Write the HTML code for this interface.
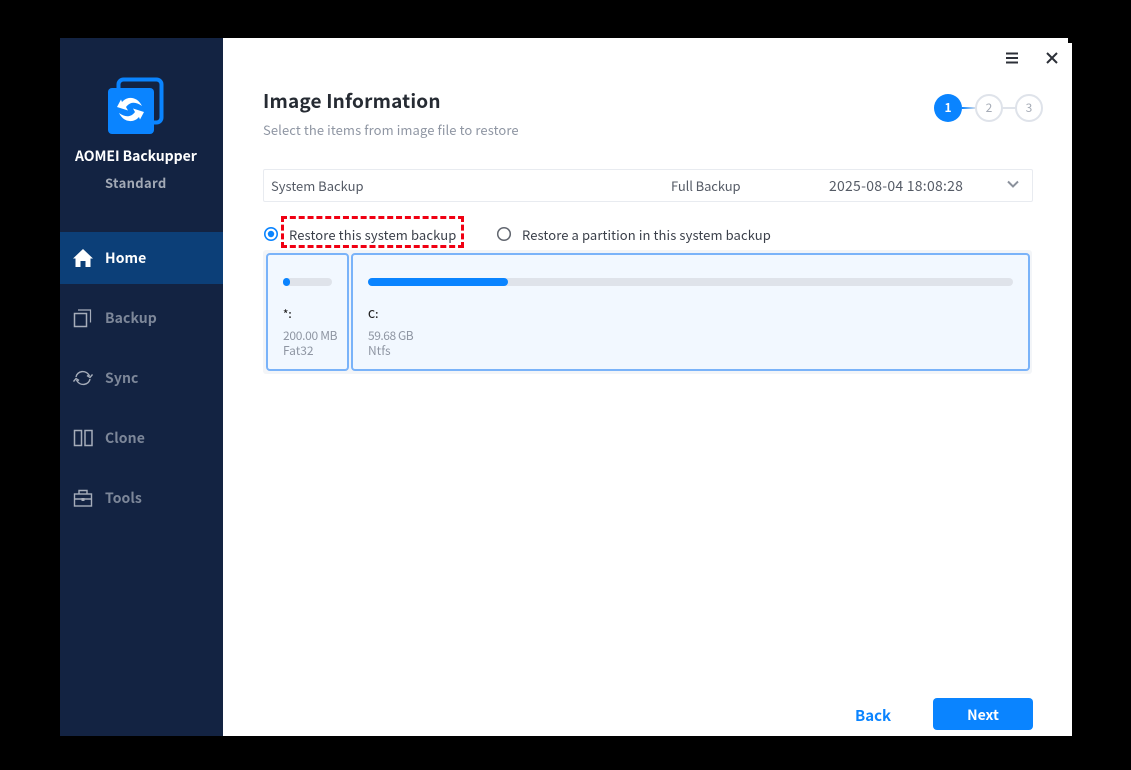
<!DOCTYPE html>
<html><head><meta charset="utf-8">
<style>
html,body{margin:0;padding:0;width:1131px;height:770px;background:#000;overflow:hidden}
body{position:relative;font-family:"Noto Sans CJK SC","Liberation Sans",sans-serif;color:#333}
div,span,svg{position:absolute}
.t{white-space:nowrap;line-height:20px;height:20px}
.nav{left:105px;font-size:14px;font-weight:700;color:#7d8799;letter-spacing:.1px}
</style></head><body>
<div style="left:60px;top:38px;width:163px;height:698px;background:#132342"></div>
<div style="left:223px;top:38px;width:849px;height:698px;background:#fff"></div>
<div style="left:1068px;top:38px;width:4px;height:5px;background:#000"></div>
<div style="left:60px;top:232px;width:163px;height:52px;background:#0c3f78"></div>

<svg style="left:107px;top:77px" width="58" height="58" viewBox="0 0 58 58">
<rect x="11.5" y="2.5" width="43" height="43" rx="5" fill="none" stroke="#0a84ff" stroke-width="4"/>
<rect x="1" y="11" width="46" height="46" rx="4" fill="#0a84ff"/>
<path d="M10 30 L14 22.5 L15 25 C20 19 30 19 35 29 C29 24.5 23 24.5 19 30 L21 33.5 Z" fill="#fff"/>
<path d="M37 35 L33 42.5 L32 40 C27 46 17 46 12 36 C18 40.5 24 40.5 28 35 L26 31.5 Z" fill="#fff"/>
</svg>
<div class="t" style="left:75px;top:146px;font-size:14px;font-weight:700;color:#fff;letter-spacing:-.05px">AOMEI Backupper</div>
<div class="t" style="left:105px;top:173px;font-size:13px;font-weight:700;color:#a2a9b5;letter-spacing:.35px">Standard</div>

<svg style="left:73px;top:248px" width="20" height="20" viewBox="0 0 20 20"><path d="M10 1 L20 10.5 L17.5 10.5 L17.5 19 L12.5 19 L12.5 13 L7.5 13 L7.5 19 L2.5 19 L2.5 10.5 L0 10.5 Z" fill="#fff"/></svg>
<div class="t nav" style="top:248px;color:#fff">Home</div>

<svg style="left:73px;top:308px" width="20" height="20" viewBox="0 0 20 20" fill="none" stroke="#a6adba" stroke-width="1.5"><rect x="1.5" y="5.5" width="12" height="13"/><path d="M5 2 H17.5 V14.5" stroke-width="1.2"/></svg>
<div class="t nav" style="top:308px">Backup</div>

<svg style="left:73px;top:368px" width="20" height="20" viewBox="0 0 20 20" fill="none" stroke="#a6adba" stroke-width="1.4"><path d="M3 9 C4 3 13 1 16.5 8"/><path d="M17 11 C16 17 7 19 3.5 12"/><path d="M14 7.5 L17 9.5 L19.5 6.5"/><path d="M6 12.5 L3 10.5 L0.5 13.5"/></svg>
<div class="t nav" style="top:368px">Sync</div>

<svg style="left:73px;top:428px" width="20" height="20" viewBox="0 0 20 20" fill="none" stroke="#a6adba" stroke-width="1.5"><rect x="1.5" y="2.5" width="7" height="15"/><rect x="12" y="2.5" width="7" height="15"/></svg>
<div class="t nav" style="top:428px">Clone</div>

<svg style="left:73px;top:488px" width="20" height="20" viewBox="0 0 20 20" fill="none" stroke="#a6adba" stroke-width="1.4"><rect x="1.5" y="6" width="17" height="12"/><path d="M6 6 V2.5 H14 V6"/><path d="M1.5 11 H18.5"/><rect x="8.5" y="10" width="3" height="3" fill="#a6adba" stroke="none"/></svg>
<div class="t nav" style="top:488px">Tools</div>

<svg style="left:1005px;top:51px" width="14" height="14" viewBox="0 0 14 14" fill="#2c3038"><rect x="1" y="1.5" width="12" height="2"/><rect x="1" y="6" width="12" height="2"/><rect x="1" y="10.5" width="12" height="2"/></svg>
<svg style="left:1045px;top:51px" width="14" height="14" viewBox="0 0 14 14" fill="none" stroke="#2c3038" stroke-width="2"><path d="M2 2 L12 12 M12 2 L2 12"/></svg>

<div class="t" style="left:263px;top:89px;height:24px;line-height:24px;font-size:19px;font-weight:700;color:#262b33;letter-spacing:.18px">Image Information</div>
<div class="t" style="left:263px;top:120px;font-size:13px;color:#8f96a3;letter-spacing:.1px">Select the items from image file to restore</div>

<div style="left:962px;top:107px;width:14px;height:2px;background:linear-gradient(90deg,#0a84ff,#dfe3ea)"></div>
<div style="left:1002px;top:107px;width:14px;height:2px;background:#dfe3ea"></div>
<div style="left:934px;top:94px;width:28px;height:28px;border-radius:50%;background:#0a84ff;color:#fff;font-size:12px;font-weight:700;line-height:28px;text-align:center">1</div>
<div style="left:975px;top:94px;width:24px;height:24px;border:2px solid #dfe3ea;border-radius:50%;color:#a5abb6;font-size:12px;line-height:24px;text-align:center">2</div>
<div style="left:1015px;top:94px;width:24px;height:24px;border:2px solid #dfe3ea;border-radius:50%;color:#a5abb6;font-size:12px;line-height:24px;text-align:center">3</div>

<div style="left:263px;top:169px;width:768px;height:31px;border:1px solid #e8ebf0;border-radius:2px"></div>
<div class="t" style="left:271px;top:176px;font-size:13px;color:#555b66">System Backup</div>
<div class="t" style="left:671px;top:176px;font-size:13px;color:#555b66;letter-spacing:-.1px">Full Backup</div>
<div class="t" style="left:829px;top:176px;font-size:14px;color:#555b66;letter-spacing:.25px">2025-08-04 18:08:28</div>
<svg style="left:1006px;top:179px" width="14" height="12" viewBox="0 0 14 12" fill="none" stroke="#8b919c" stroke-width="2"><path d="M2 2.5 L7 7.5 L12 2.5"/></svg>

<svg style="left:263px;top:226px" width="16" height="16" viewBox="0 0 16 16"><circle cx="8" cy="8" r="6.2" fill="none" stroke="#0a84ff" stroke-width="1.6"/><circle cx="8" cy="8" r="3.2" fill="#0a84ff"/></svg>
<div style="left:281px;top:216px;width:177px;height:26px;border:3px dashed #f00012"></div>
<div class="t" style="left:289px;top:225px;font-size:13px;color:#3a3f49;letter-spacing:.12px">Restore this system backup</div>
<svg style="left:496px;top:226px" width="16" height="16" viewBox="0 0 16 16"><circle cx="8" cy="8" r="6.3" fill="none" stroke="#61666f" stroke-width="1.5"/></svg>
<div class="t" style="left:522px;top:225px;font-size:13px;color:#3a3f49;letter-spacing:.1px">Restore a partition in this system backup</div>

<div style="left:263px;top:250px;width:769px;height:124px;background:#f3f5f8;border-radius:3px"></div>
<div style="left:266px;top:253px;width:79px;height:114px;background:#f2f8ff;border:2px solid #7ab3f9;border-radius:4px"></div>
<div style="left:351px;top:253px;width:675px;height:114px;background:#f2f8ff;border:2px solid #7ab3f9;border-radius:4px"></div>

<div style="left:283px;top:278px;width:49px;height:8px;border-radius:4px;background:#dfe3ea"></div>
<div style="left:283px;top:278px;width:7px;height:8px;border-radius:4px;background:#0a84ff"></div>
<div style="left:368px;top:278px;width:645px;height:8px;border-radius:4px;background:#dfe3ea"></div>
<div style="left:368px;top:278px;width:140px;height:8px;border-radius:4px;background:#0a84ff"></div>

<div class="t" style="left:283px;top:304px;font-size:11px;font-weight:500;color:#222">*:</div>
<div class="t" style="left:283px;top:326px;font-size:12px;color:#8f96a3;letter-spacing:-.3px">200.00 MB</div>
<div class="t" style="left:283px;top:341px;font-size:12px;color:#8f96a3">Fat32</div>
<div class="t" style="left:368px;top:304px;font-size:11px;font-weight:500;color:#222">C:</div>
<div class="t" style="left:368px;top:326px;font-size:12px;color:#8f96a3;letter-spacing:-.45px">59.68 GB</div>
<div class="t" style="left:368px;top:341px;font-size:12px;color:#8f96a3">Ntfs</div>

<div class="t" style="left:855px;top:706px;font-size:15px;font-weight:700;color:#0a84ff">Back</div>
<div style="left:933px;top:698px;width:100px;height:32px;border-radius:4px;background:#0a84ff;color:#fff;font-size:14px;font-weight:700;line-height:34px;text-align:center">Next</div>
</body></html>
